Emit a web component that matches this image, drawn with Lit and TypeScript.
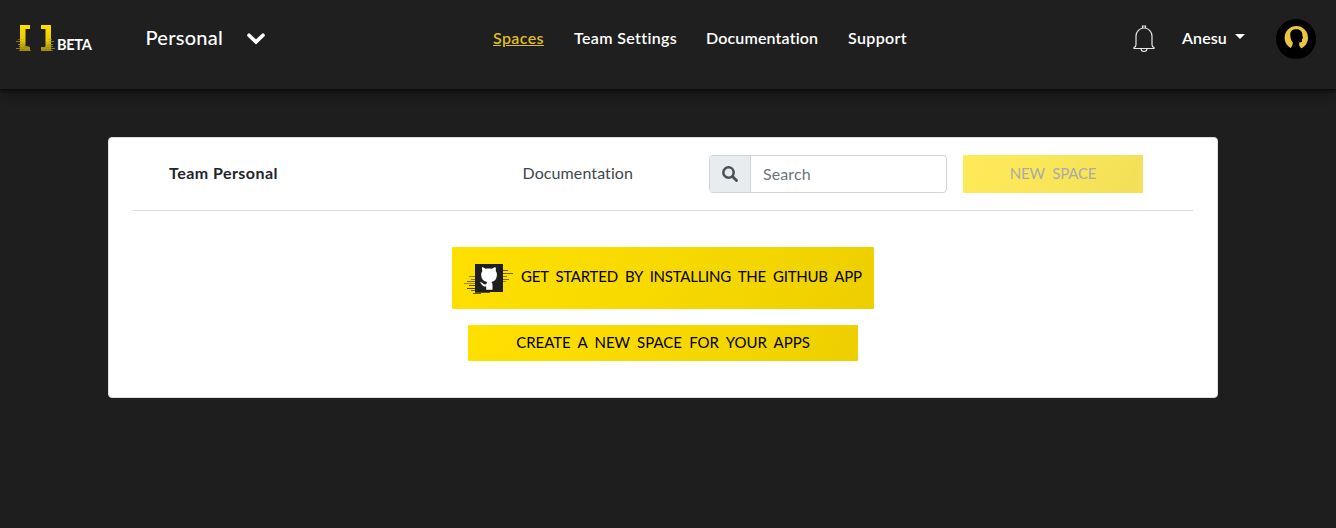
import { LitElement, html, css, svg } from "lit";
import { customElement } from "lit/decorators.js";

const glitch = (rows: number[][], fill: string) =>
  rows.map(([x, y, w, o]) => svg`<rect x=${x} y=${y} width=${w} height="1" fill=${fill} opacity=${o} />`);

@customElement("site-header")
export class SiteHeader extends LitElement {
  static styles = css`
    :host { display: block; }
    header {
      box-sizing: border-box; height: 89px; padding: 0 20px 11px 16px;
      display: flex; align-items: center; background: #1f1f1f; color: #fff;
      position: relative;
      box-shadow: 0 1px 3px #080808, 0 6px 10px rgba(0, 0, 0, 0.3);
    }
    .brand { width: 129.5px; height: 30px; display: flex; align-items: flex-end; }
    .beta { font-size: 14.5px; font-weight: 700; line-height: 18px; letter-spacing: -0.3px; margin-left: 1px; }
    .team { width: 101px; font-size: 20px; font-weight: 500; letter-spacing: 0.25px; padding-bottom: 4px; }
    .chev { width: 246.5px; height: 12px; }
    .chev svg, .bell svg, .avatar svg, .brand svg { display: block; }
    nav { display: flex; flex: 1; font-size: 16px; font-weight: 600; padding-bottom: 4px; }
    nav a { white-space: nowrap; }
    .spaces { width: 81px; color: #dfbd1c; text-decoration: underline; letter-spacing: 0.38px; }
    .settings { width: 132px; letter-spacing: 0.36px; }
    .docs { width: 142px; letter-spacing: 0.15px; }
    .support { letter-spacing: 0.35px; }
    .bell { width: 49px; }
    .user { width: 94px; display: flex; align-items: center; font-size: 16px; font-weight: 600; padding-bottom: 4px; }
    .name { width: 53px; letter-spacing: 0.1px; }
    .caret { border: 5px solid transparent; border-top-color: #fff; border-bottom: 0; margin-top: -2px; }
  `;
  render() {
    return html`<header>
      <div class="brand">
        <svg width="40" height="30" viewBox="0 0 40 30">
          <defs><linearGradient id="g" x1="0" y1="0" x2="0" y2="1">
            <stop offset="0" stop-color="#ffe000" /><stop offset=".6" stop-color="#e8ca05" /><stop offset="1" stop-color="#8c7b12" />
          </linearGradient></defs>
          <path d="M4 1h10v4H9.500v18H14v4H4zM25 1h10v26H25v-4h4.500V5H25z" fill="url(#g)" />
          ${glitch([[2,15,5,.5],[0,17,6,.7],[2,20,7,.8],[3,22,10,.7],[0,24,14,.7],[3,26,12,.6],
            [32,15,4,.5],[33,17,5,.7],[32,20,5,.7],[29,22,8,.7],[25,24,14,.7],[25,26,12,.6]], "#b8a00b")}
        </svg>
        <span class="beta">BETA</span>
      </div>
      <div class="team">Personal</div>
      <div class="chev"><svg width="18" height="12" viewBox="0 0 18 12"><path d="M2 2.200l7 6.700 7-6.700" fill="none" stroke="#fff" stroke-width="3.600" stroke-linecap="round" /></svg></div>
      <nav><a class="spaces">Spaces</a><a class="settings">Team Settings</a><a class="docs">Documentation</a><a class="support">Support</a></nav>
      <div class="bell"><svg width="22" height="28" viewBox="0 0 22 28" fill="none" stroke="#e6e6e6" stroke-width="1.200"><path d="M1 22.500c1.500-.5 2-1.500 2-3V11a8 8 0 0 1 16 0v8.500c0 1.500.5 2.500 2 3v1H1zM9.500 3V1h3v2M8 23.500c0 4 6 4 6 0" /></svg></div>
      <div class="user"><span class="name">Anesu</span><i class="caret"></i></div>
      <div class="avatar"><svg width="40" height="40" viewBox="0 0 40 40"><circle cx="20" cy="20" r="20" fill="#000" /><circle cx="20.300" cy="18.700" r="11.700" fill="#edc63e" /><path d="M14.300 16c-.2-4 2.400-5.700 5.900-5.700s6.300 1.900 6.100 5.700l.7 3.200-1 .8v3l-2.800.6v3l3.300 4.900H13.500l3-5.500.3-2.500c-1.700-2-2.200-3.800-2.500-7.500z" fill="#000" /></svg></div>
    </header>`;
  }
}

@customElement("team-card")
export class TeamCard extends LitElement {
  static styles = css`
    :host { display: block; }
    .card {
      box-sizing: border-box; width: 1110px; height: 261px; margin: 48px 0 0 108px; padding: 17px 24px 0;
      border: 1px solid #dfdfdf; border-radius: 4px; background: #fff; color: #212529;
    }
    .bar { height: 55px; border-bottom: 1px solid #dcdcdc; display: flex; padding-left: 36px; line-height: 36px; }
    .title { width: 353.5px; font-weight: 700; font-size: 16px; letter-spacing: 0.46px; }
    .docs { width: 186.5px; color: #40464c; font-size: 16px; letter-spacing: 0.1px; }
    .search { box-sizing: border-box; width: 238px; height: 38px; border: 1px solid #ced4da; border-radius: 4px; display: flex; overflow: hidden; }
    .icon { width: 40px; background: #e9ecef; border-right: 1px solid #ced4da; display: grid; place-items: center; }
    .ph { padding-left: 12px; color: #6c757d; font-size: 16px; letter-spacing: 0.1px; }
    .btn { background: linear-gradient(120deg, #ffe000, #f7d900 50%, #edcf00); color: #000; white-space: nowrap; border-radius: 1px; display: flex; align-items: center; box-sizing: border-box; padding-bottom: 2px; font-size: 15px; }
    .new { width: 180px; height: 38px; margin-left: 16px; justify-content: center; opacity: 0.65; color: #7d7d7d; word-spacing: 4px; letter-spacing: -0.2px; }
    .actions { display: flex; flex-direction: column; align-items: center; gap: 16px; padding-top: 36px; }
    .install { width: 422px; height: 62px; padding: 0 0 0 12px; }
    .install svg { margin-right: 7px; flex: none; }
    .install span { padding-bottom: 4px; word-spacing: 3.5px; letter-spacing: -0.24px; }
    .create { width: 390px; height: 36px; justify-content: center; word-spacing: 3.5px; letter-spacing: -0.03px; }
  `;
  render() {
    return html`<section class="card">
      <div class="bar">
        <div class="title">Team Personal</div>
        <div class="docs">Documentation</div>
        <div class="search">
          <div class="icon"><svg width="16" height="16" viewBox="0 0 16 16" fill="none" stroke="#495057"><circle cx="6.500" cy="6.500" r="5.200" stroke-width="2.500" /><path d="M10.500 10.500l4 4" stroke-width="2.900" stroke-linecap="round" /></svg></div>
          <div class="ph">Search</div>
        </div>
        <div class="btn new">NEW SPACE</div>
      </div>
      <div class="actions">
        <div class="btn install">
          <svg width="50" height="34" viewBox="0 0 50 34">
            ${glitch([[5,15,7,.6],[7,18,6,.6],[3,20,10,.7],[0,22,14,.5],[5,24,7,.9],[3,27,9,.9],[7,29,20,.7],[11,31,15,.8],[9,32,8,.8],
              [38,9,6,.8],[38,12,11,.7],[38,15,5,.6],[38,18,7,.7],[38,20,4,.5]], "#3a3205")}
            <rect x="11" y="3" width="28" height="28" fill="#1f1f1f" />
            <path fill="#fff" d="M18 6.300c1.200 0 2.600.7 3.600 1.500 2-.5 4.300-.5 6.300 0 1-.8 2.400-1.500 3.600-1.500.6 1.300.5 2.600.2 3.700 1 1.200 1.400 2.600 1.200 4.500-.3 3.800-2.200 5.900-5.600 6.600 1 .9 1.200 1.900 1.200 3.200v4.500h-6.300v-3.300c-3.700.6-4.300-2.600-6.200-4.100 2.200-.7 3 2.300 5.200 2 .5 0 .9-.1 1.200-.3.1-.8.3-1.400.8-2-3.600-.7-5.700-2.800-6-6.600-.1-1.900.2-3.300 1.200-4.500-.5-1.100-.6-2.400-.4-3.700z" />
          </svg>
          <span>GET STARTED BY INSTALLING THE GITHUB APP</span>
        </div>
        <div class="btn create">CREATE A NEW SPACE FOR YOUR APPS</div>
      </div>
    </section>`;
  }
}

@customElement("app-root")
export class AppRoot extends LitElement {
  static styles = css`
    :host { display: flow-root; height: 528px; background: #1e1e1e; font-family: Lato, "Open Sans", sans-serif; overflow: hidden; }
  `;
  render() {
    return html`<site-header></site-header><team-card></team-card>`;
  }
}
